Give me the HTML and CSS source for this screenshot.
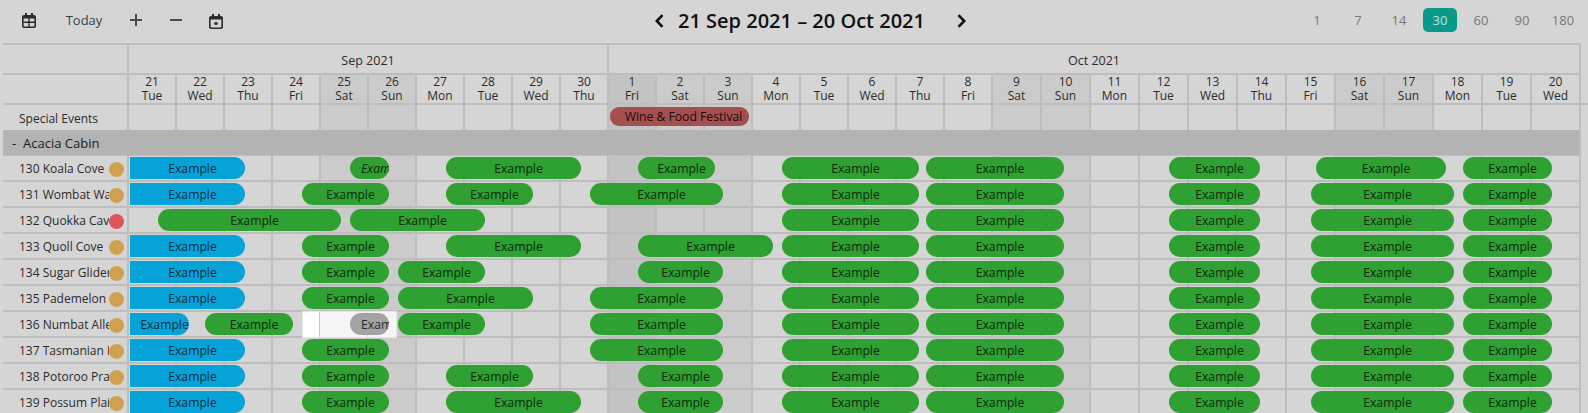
FILE: index.html
```html
<!DOCTYPE html>
<html lang="en">
<head>
<meta charset="utf-8">
<title>Tape chart</title>
<link rel="stylesheet" href="styles.css">
</head>
<body>
<header class="toolbar">
  <div class="tools">
    <button class="tool tool-cal" aria-label="Month view"><svg width="14" height="15" viewBox="0 0 14 15"><path class="ico-fill" d="M3 0h2v2h4V0h2v2h1a2 2 0 0 1 2 2v9a2 2 0 0 1-2 2H2a2 2 0 0 1-2-2V4a2 2 0 0 1 2-2h1z"/><path class="ico-cut" d="M1.6 5.6h4.7v3H1.6zM7.7 5.6h4.7v3H7.7zM1.6 10h4.7v3.4H2.4a.8.8 0 0 1-.8-.8zM7.7 10h4.7v2.6a.8.8 0 0 1-.8.8H7.7z"/></svg></button>
    <button class="tool tool-today">Today</button>
    <button class="tool tool-sym" aria-label="Zoom in"><svg width="12" height="12" viewBox="0 0 12 12"><path class="ico-line" d="M6 0v12M0 6h12"/></svg></button>
    <button class="tool tool-sym" aria-label="Zoom out"><svg width="12" height="12" viewBox="0 0 12 12"><path class="ico-line" d="M0 6h12"/></svg></button>
    <button class="tool tool-sym" aria-label="Go to today"><svg width="14" height="15" viewBox="0 0 14 15"><path class="ico-fill" d="M3 0h2v2h4V0h2v2h1a2 2 0 0 1 2 2v9a2 2 0 0 1-2 2H2a2 2 0 0 1-2-2V4a2 2 0 0 1 2-2h1z"/><path class="ico-cut" d="M1.6 5.4h10.8v7.2a.8.8 0 0 1-.8.8H2.4a.8.8 0 0 1-.8-.8z"/><circle class="ico-dot" cx="7" cy="9.4" r="1.7"/></svg></button>
  </div>
  <div class="range">
    <svg class="chev" width="9" height="14" viewBox="0 0 9 14"><path d="M7.5 1.2 1.8 7l5.7 5.8"/></svg>
    <h1 class="range-title">21 Sep 2021 – 20 Oct 2021</h1>
    <svg class="chev" width="9" height="14" viewBox="0 0 9 14"><path d="M1.5 1.2 7.2 7l-5.7 5.8"/></svg>
  </div>
  <div class="spans">
    <span class="span">1</span><span class="span">7</span><span class="span">14</span><span class="span span-on">30</span><span class="span">60</span><span class="span">90</span><span class="span">180</span>
  </div>
</header>

<main class="sheet">
  <div class="months">
    <div class="corner"></div>
    <div class="month">Sep 2021</div>
    <div class="month month-last">Oct 2021</div>
  </div>
  <div class="dates">
    <div class="corner"></div>
    <div class="date">21<br>Tue</div><div class="date">22<br>Wed</div><div class="date">23<br>Thu</div><div class="date">24<br>Fri</div><div class="date wk">25<br>Sat</div><div class="date wk">26<br>Sun</div><div class="date">27<br>Mon</div><div class="date">28<br>Tue</div><div class="date">29<br>Wed</div><div class="date">30<br>Thu</div>
    <div class="date hol">1<br>Fri</div><div class="date wk">2<br>Sat</div><div class="date wk">3<br>Sun</div><div class="date">4<br>Mon</div><div class="date">5<br>Tue</div><div class="date">6<br>Wed</div><div class="date">7<br>Thu</div><div class="date">8<br>Fri</div><div class="date wk">9<br>Sat</div><div class="date wk">10<br>Sun</div><div class="date">11<br>Mon</div><div class="date">12<br>Tue</div><div class="date">13<br>Wed</div><div class="date">14<br>Thu</div><div class="date">15<br>Fri</div><div class="date wk">16<br>Sat</div><div class="date wk">17<br>Sun</div><div class="date">18<br>Mon</div><div class="date">19<br>Tue</div><div class="date">20<br>Wed</div>
  </div>

  <div class="grid-body">
    <div class="columns">
      <div class="corner"></div>
      <i></i><i></i><i></i><i></i><i class="wk"></i><i class="wk"></i><i></i><i></i><i></i><i></i>
      <i class="hol"></i><i class="wk"></i><i class="wk"></i><i></i><i></i><i></i><i></i><i></i><i class="wk"></i><i class="wk"></i><i></i><i></i><i></i><i></i><i></i><i class="wk"></i><i class="wk"></i><i></i><i></i><i></i>
    </div>

    <div class="row row-special">
      <div class="label"><span class="name">Special Events</span></div>
      <div class="lane"><div class="bar event" style="left:481px;width:139px">Wine &amp; Food Festival</div></div>
    </div>

    <div class="group"><span class="group-toggle">-</span><span>Acacia Cabin</span></div>

    <div class="row">
      <div class="label"><span class="name">130 Koala Cove</span><span class="dot"></span></div>
      <div class="lane">
        <div class="bar blue" style="left:1px;width:115px">Example</div>
        <div class="bar green hold" style="left:221px;width:39px">Example</div>
        <div class="bar green" style="left:317px;width:135px">Example</div>
        <div class="bar green" style="left:509px;width:77px">Example</div>
        <div class="bar green" style="left:653px;width:137px">Example</div>
        <div class="bar green" style="left:797px;width:138px">Example</div>
        <div class="bar green" style="left:1040px;width:91px">Example</div>
        <div class="bar green" style="left:1187px;width:130px">Example</div>
        <div class="bar green" style="left:1334px;width:89px">Example</div>
      </div>
    </div>
    <div class="row">
      <div class="label"><span class="name">131 Wombat Waters</span><span class="dot"></span></div>
      <div class="lane">
        <div class="bar blue" style="left:1px;width:115px">Example</div>
        <div class="bar green" style="left:173px;width:87px">Example</div>
        <div class="bar green" style="left:317px;width:87px">Example</div>
        <div class="bar green" style="left:461px;width:133px">Example</div>
        <div class="bar green" style="left:653px;width:137px">Example</div>
        <div class="bar green" style="left:797px;width:138px">Example</div>
        <div class="bar green" style="left:1040px;width:91px">Example</div>
        <div class="bar green" style="left:1182px;width:143px">Example</div>
        <div class="bar green" style="left:1334px;width:89px">Example</div>
      </div>
    </div>
    <div class="row">
      <div class="label"><span class="name">132 Quokka Cave</span><span class="dot dot-red"></span></div>
      <div class="lane">
        <div class="bar green" style="left:29px;width:183px">Example</div>
        <div class="bar green" style="left:221px;width:135px">Example</div>
        <div class="bar green" style="left:653px;width:137px">Example</div>
        <div class="bar green" style="left:797px;width:138px">Example</div>
        <div class="bar green" style="left:1040px;width:91px">Example</div>
        <div class="bar green" style="left:1182px;width:143px">Example</div>
        <div class="bar green" style="left:1334px;width:89px">Example</div>
      </div>
    </div>
    <div class="row">
      <div class="label"><span class="name">133 Quoll Cove</span><span class="dot"></span></div>
      <div class="lane">
        <div class="bar blue" style="left:1px;width:115px">Example</div>
        <div class="bar green" style="left:173px;width:87px">Example</div>
        <div class="bar green" style="left:317px;width:135px">Example</div>
        <div class="bar green" style="left:509px;width:135px">Example</div>
        <div class="bar green" style="left:653px;width:137px">Example</div>
        <div class="bar green" style="left:797px;width:138px">Example</div>
        <div class="bar green" style="left:1040px;width:91px">Example</div>
        <div class="bar green" style="left:1182px;width:143px">Example</div>
        <div class="bar green" style="left:1334px;width:89px">Example</div>
      </div>
    </div>
    <div class="row">
      <div class="label"><span class="name">134 Sugar Glider</span><span class="dot"></span></div>
      <div class="lane">
        <div class="bar blue" style="left:1px;width:115px">Example</div>
        <div class="bar green" style="left:173px;width:87px">Example</div>
        <div class="bar green" style="left:269px;width:87px">Example</div>
        <div class="bar green" style="left:509px;width:85px">Example</div>
        <div class="bar green" style="left:653px;width:137px">Example</div>
        <div class="bar green" style="left:797px;width:138px">Example</div>
        <div class="bar green" style="left:1040px;width:91px">Example</div>
        <div class="bar green" style="left:1182px;width:143px">Example</div>
        <div class="bar green" style="left:1334px;width:89px">Example</div>
      </div>
    </div>
    <div class="row">
      <div class="label"><span class="name">135 Pademelon</span><span class="dot"></span></div>
      <div class="lane">
        <div class="bar blue" style="left:1px;width:115px">Example</div>
        <div class="bar green" style="left:173px;width:87px">Example</div>
        <div class="bar green" style="left:269px;width:135px">Example</div>
        <div class="bar green" style="left:461px;width:133px">Example</div>
        <div class="bar green" style="left:653px;width:137px">Example</div>
        <div class="bar green" style="left:797px;width:138px">Example</div>
        <div class="bar green" style="left:1040px;width:91px">Example</div>
        <div class="bar green" style="left:1182px;width:143px">Example</div>
        <div class="bar green" style="left:1334px;width:89px">Example</div>
      </div>
    </div>
    <div class="row">
      <div class="label"><span class="name">136 Numbat Alley</span><span class="dot"></span></div>
      <div class="lane">
        <div class="bar blue" style="left:1px;width:59px">Example</div>
        <div class="bar green" style="left:76px;width:88px">Example</div>
        <div class="selection" style="left:173px;width:95px"><span class="sel-a"></span><span class="sel-b"></span><span class="sel-c"></span></div>
        <div class="bar grey" style="left:221px;width:39px">Example</div>
        <div class="bar green" style="left:269px;width:87px">Example</div>
        <div class="bar green" style="left:461px;width:133px">Example</div>
        <div class="bar green" style="left:653px;width:137px">Example</div>
        <div class="bar green" style="left:797px;width:138px">Example</div>
        <div class="bar green" style="left:1040px;width:91px">Example</div>
        <div class="bar green" style="left:1182px;width:143px">Example</div>
        <div class="bar green" style="left:1334px;width:89px">Example</div>
      </div>
    </div>
    <div class="row">
      <div class="label"><span class="name">137 Tasmanian Devil</span><span class="dot"></span></div>
      <div class="lane">
        <div class="bar blue" style="left:1px;width:115px">Example</div>
        <div class="bar green" style="left:173px;width:87px">Example</div>
        <div class="bar green" style="left:461px;width:133px">Example</div>
        <div class="bar green" style="left:653px;width:137px">Example</div>
        <div class="bar green" style="left:797px;width:138px">Example</div>
        <div class="bar green" style="left:1040px;width:91px">Example</div>
        <div class="bar green" style="left:1182px;width:143px">Example</div>
        <div class="bar green" style="left:1334px;width:89px">Example</div>
      </div>
    </div>
    <div class="row">
      <div class="label"><span class="name">138 Potoroo Prairie</span><span class="dot"></span></div>
      <div class="lane">
        <div class="bar blue" style="left:1px;width:115px">Example</div>
        <div class="bar green" style="left:173px;width:87px">Example</div>
        <div class="bar green" style="left:317px;width:87px">Example</div>
        <div class="bar green" style="left:509px;width:85px">Example</div>
        <div class="bar green" style="left:653px;width:137px">Example</div>
        <div class="bar green" style="left:797px;width:138px">Example</div>
        <div class="bar green" style="left:1040px;width:91px">Example</div>
        <div class="bar green" style="left:1182px;width:143px">Example</div>
        <div class="bar green" style="left:1334px;width:89px">Example</div>
      </div>
    </div>
    <div class="row">
      <div class="label"><span class="name">139 Possum Plains</span><span class="dot"></span></div>
      <div class="lane">
        <div class="bar blue" style="left:1px;width:115px">Example</div>
        <div class="bar green" style="left:173px;width:87px">Example</div>
        <div class="bar green" style="left:317px;width:135px">Example</div>
        <div class="bar green" style="left:509px;width:85px">Example</div>
        <div class="bar green" style="left:653px;width:137px">Example</div>
        <div class="bar green" style="left:797px;width:138px">Example</div>
        <div class="bar green" style="left:1040px;width:91px">Example</div>
        <div class="bar green" style="left:1182px;width:143px">Example</div>
        <div class="bar green" style="left:1334px;width:89px">Example</div>
      </div>
    </div>
  </div>
</main>
</body>
</html>
```
FILE: styles.css
```css
* { box-sizing: border-box; }

html, body {
  margin: 0;
  height: 413px;
  overflow: hidden;
  background: #d5d5d5;
  color: #2b2b2b;
  font: 12px/14px "Open Sans", "Liberation Sans", sans-serif;
}

/* Toolbar */
.toolbar {
  display: flex;
  align-items: center;
  height: 43px;
}
.tools {
  display: flex;
  align-items: center;
  width: 650px;
  padding-left: 22px;
}
.tool {
  display: flex;
  align-items: center;
  justify-content: center;
  padding: 0;
  border: 0;
  background: none;
  color: #33424c;
  font: 13px/18px "Open Sans", sans-serif;
}
.tool-cal { width: 14px; margin-top: -3px; }
.tool-today { width: 38px; margin: -3px 0 0 29px; }
.tool-sym { width: 14px; margin-left: 26px; }
.tool-sym:nth-child(3) { margin-left: 26px; margin-top: -3px; }
.tool-sym:nth-child(4) { margin-top: -3px; }
.tool-sym:nth-child(5) { margin-top: -1px; }
.ico-fill { fill: #2b2b2b; }
.ico-cut { fill: #d5d5d5; }
.ico-dot { fill: #2b2b2b; }
.ico-line { stroke: #4a4a4a; stroke-width: 2; fill: none; }

.range {
  display: flex;
  align-items: center;
  gap: 14px;
  margin-left: 5px;
  margin-top: -2px;
}
.range-title {
  margin: 0;
  color: #111;
  font: 600 20px/28px "Open Sans", sans-serif;
  white-space: nowrap;
}
.chev { flex: none; }
.chev path { fill: none; stroke: #111; stroke-width: 2.6; }
.range .chev:last-child { margin-left: 18px; }

.spans {
  display: flex;
  gap: 7px;
  margin-left: auto;
  margin-top: -4px;
  padding-right: 8px;
}
.span {
  width: 34px;
  height: 24px;
  border-radius: 5px;
  color: #777;
  font-size: 13px;
  line-height: 24px;
  text-align: center;
}
.span-on {
  background: #0a9a8b;
  color: #bfe3de;
}

/* Sheet */
.sheet {
  --line: 2px solid #bdbdbd;
  margin-left: 3px;
}
.months {
  display: grid;
  grid-template-columns: 126px 480px 972px;
  width: 1578px;
  height: 32px;
  border-top: var(--line);
  border-bottom: var(--line);
}
.corner { border-right: var(--line); }
.month {
  border-right: var(--line);
  padding-top: 9px;
  font-size: 12.5px;
  text-align: center;
}
.dates {
  display: grid;
  grid-template-columns: 126px repeat(18, 48px) repeat(12, 49px);
  height: 30px;
  border-bottom: var(--line);
}
.date {
  border-right: var(--line);
  text-align: center;
  line-height: 14px;
}

.wk { background: #cbcbcb; }
.hol { background: #c3c3c3; }

/* Body: a column layer behind transparent rows */
.grid-body {
  position: relative;
  width: 1578px;
}
.columns {
  position: absolute;
  inset: 0;
  height: 320px;
  display: grid;
  grid-template-columns: 126px repeat(18, 48px) repeat(12, 49px);
}
.columns i { border-right: var(--line); }

.row {
  position: relative;
  display: flex;
  height: 26px;
  border-bottom: var(--line);
}
.row-special { height: 25px; border-bottom: 0; }
.label {
  display: flex;
  flex: none;
  align-items: center;
  width: 126px;
  padding: 0 5px 0 16px;
}
.name {
  flex: 1;
  min-width: 0;
  overflow: hidden;
  padding-top: 2px;
  white-space: nowrap;
}
.dot {
  flex: none;
  width: 15px;
  height: 15px;
  margin-top: 2px;
  border-radius: 50%;
  background: #cfa14f;
}
.dot-red { background: #dc5557; }
.lane {
  position: relative;
  flex: 1;
}

.group {
  position: relative;
  display: flex;
  align-items: center;
  gap: 7px;
  height: 26px;
  padding-left: 9px;
  background: #b3b3b3;
  border-right: var(--line);
  border-bottom: 1px solid #bdbdbd;
  font-size: 13px;
  color: #1c1c1c;
}
.group-toggle { width: 4px; }

.bar {
  position: absolute;
  top: 1px;
  height: 22px;
  padding-left: 10px;
  overflow: hidden;
  border-radius: 11px;
  color: #0a2a0a;
  font-size: 12.2px;
  line-height: 23px;
  text-align: center;
  white-space: nowrap;
}
.green { background: #2fa032; }
.blue {
  background: #06a3d9;
  border-radius: 0 11px 11px 0;
  color: #08303f;
}
.grey {
  padding-left: 11px;
  background: #a3a3a3;
  color: #2b2b2b;
}
.hold {
  padding-left: 11px;
  font-style: italic;
}
.event {
  top: 2px;
  height: 19px;
  padding-left: 8px;
  border-radius: 9px;
  background: #a64f4f;
  color: #1d0a0a;
  line-height: 19px;
}
.selection {
  position: absolute;
  top: -1px;
  height: 27px;
  display: flex;
  border: 1px solid #e6e6e6;
}
.selection span { display: block; }
.sel-a { width: 17px; background: #fff; border-right: 1px solid #c8c8c8; }
.sel-b { width: 48px; background: #f5f5f5; border-right: 1px solid #dedede; }
.sel-c { flex: 1; background: #f5f5f5; }
```
